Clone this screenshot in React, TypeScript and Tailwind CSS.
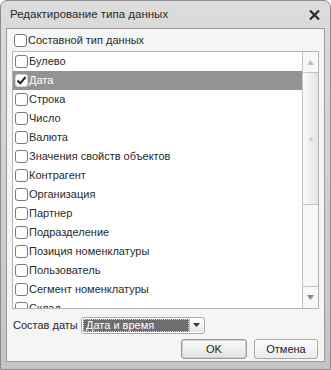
import React from "react";

const items = [
  "Булево",
  "Дата",
  "Строка",
  "Число",
  "Валюта",
  "Значения свойств объектов",
  "Контрагент",
  "Организация",
  "Партнер",
  "Подразделение",
  "Позиция номенклатуры",
  "Пользователь",
  "Сегмент номенклатуры",
  "Склад",
];

function Box({ checked }: { checked?: boolean }) {
  return (
    <span
      className={
        "flex h-[13px] w-[13px] shrink-0 items-center justify-center rounded-[3px] border " +
        (checked ? "border-[#d8d8d8] bg-white" : "border-[#7a7a7a] bg-white")
      }
    >
      {checked && (
        <svg width="11" height="11" viewBox="0 0 11 11">
          <path d="M1.5 5.5 L4.3 8.3 L9.5 2" fill="none" stroke="#222" strokeWidth="2" />
        </svg>
      )}
    </span>
  );
}

export default function App() {
  return (
    <div
      className="flex h-[370px] w-[331px] flex-col rounded-t-[7px] border border-[#8c8c8c] bg-gradient-to-b from-[#dcdcdc] to-[#c4c4c4] text-[11px] text-[#2a2a2a]"
      style={{ fontFamily: '"Liberation Sans", Arial, sans-serif' }}
    >
      <div className="flex h-[27px] shrink-0 items-center justify-between pl-[9px] pr-[10px]">
        <span className="text-[11.5px] text-[#2a2a2a]">Редактирование типа данных</span>
        <svg width="11" height="10" viewBox="0 0 11 10">
          <path d="M1 0.5 L10 9.5 M10 0.5 L1 9.5" stroke="#2a2a2a" strokeWidth="2.2" />
        </svg>
      </div>
      <div className="mx-[5px] mb-[7px] flex flex-1 flex-col border border-[#9a9a9a] bg-[#f5f5f5] px-[5px]">
        <div className="mt-[4px] flex h-[15px] items-center gap-[1px] pl-[2px]">
          <Box />
          <span>Составной тип данных</span>
        </div>
        <div className="mt-[3px] flex h-[258px] border border-[#b4b4b4] bg-white">
          <div className="flex-1 overflow-hidden">
            {items.map((t, i) => (
              <div
                key={t}
                className={
                  "flex h-[19px] items-center gap-[1px] pl-[2px] " +
                  (i === 1 ? "bg-[#939393] text-white" : "")
                }
              >
                <Box checked={i === 1} />
                <span className="whitespace-nowrap">{t}</span>
              </div>
            ))}
          </div>
          <div className="flex w-[16px] shrink-0 flex-col border-l border-[#c4c4c4] bg-[#f7f7f7]">
            <div className="flex h-[21px] items-center justify-center border-b border-[#c4c4c4]">
              <svg width="7" height="5" viewBox="0 0 7 5">
                <path d="M3.5 0 L7 5 L0 5 Z" fill="#bdbdbd" />
              </svg>
            </div>
            <div className="flex h-[132px] items-center justify-center border-b border-[#c4c4c4] bg-gradient-to-r from-[#fafafa] to-[#e4e4e4]">
              <div className="h-[4px] w-[4px] rounded-full bg-[#cfcfcf]" />
            </div>
            <div className="flex-1" />
            <div className="flex h-[22px] items-center justify-center border-t border-[#c4c4c4]">
              <svg width="7" height="5" viewBox="0 0 7 5">
                <path d="M0 0 L7 0 L3.5 5 Z" fill="#8c8c8c" />
              </svg>
            </div>
          </div>
        </div>
        <div className="mt-[8px] flex h-[16px] items-center">
          <span className="w-[69px] whitespace-nowrap pl-px">Состав даты</span>
          <div className="flex h-[17px] w-[124px] rounded-[3px] border border-[#a8a8a8] bg-white p-[1px]">
            <div className="flex flex-1 items-center border border-dotted border-[#d8d8d8] bg-[#6e6e6e] pl-[2px] text-white">
              Дата и время
            </div>
            <div className="flex w-[14px] items-center justify-center border-l border-[#c0c0c0] bg-gradient-to-b from-white to-[#e6e6e6]">
              <svg width="7" height="4" viewBox="0 0 7 4">
                <path d="M0 0 L7 0 L3.5 4 Z" fill="#333" />
              </svg>
            </div>
          </div>
        </div>
        <div className="mt-[6px] flex justify-end gap-[7px] pr-[1px]">
          <button className="flex h-[20px] w-[66px] items-center justify-center rounded-[3px] border border-[#9a9a9a] bg-gradient-to-b from-[#fafafa] to-[#e2e2e2] text-[11px] text-[#222] shadow-[inset_0_0_0_1px_#cfcfcf]">
            OK
          </button>
          <button className="flex h-[20px] w-[64px] items-center justify-center rounded-[3px] border border-[#a8a8a8] bg-gradient-to-b from-[#fcfcfc] to-[#ececec] text-[11px] text-[#222]">
            Отмена
          </button>
        </div>
      </div>
    </div>
  );
}
